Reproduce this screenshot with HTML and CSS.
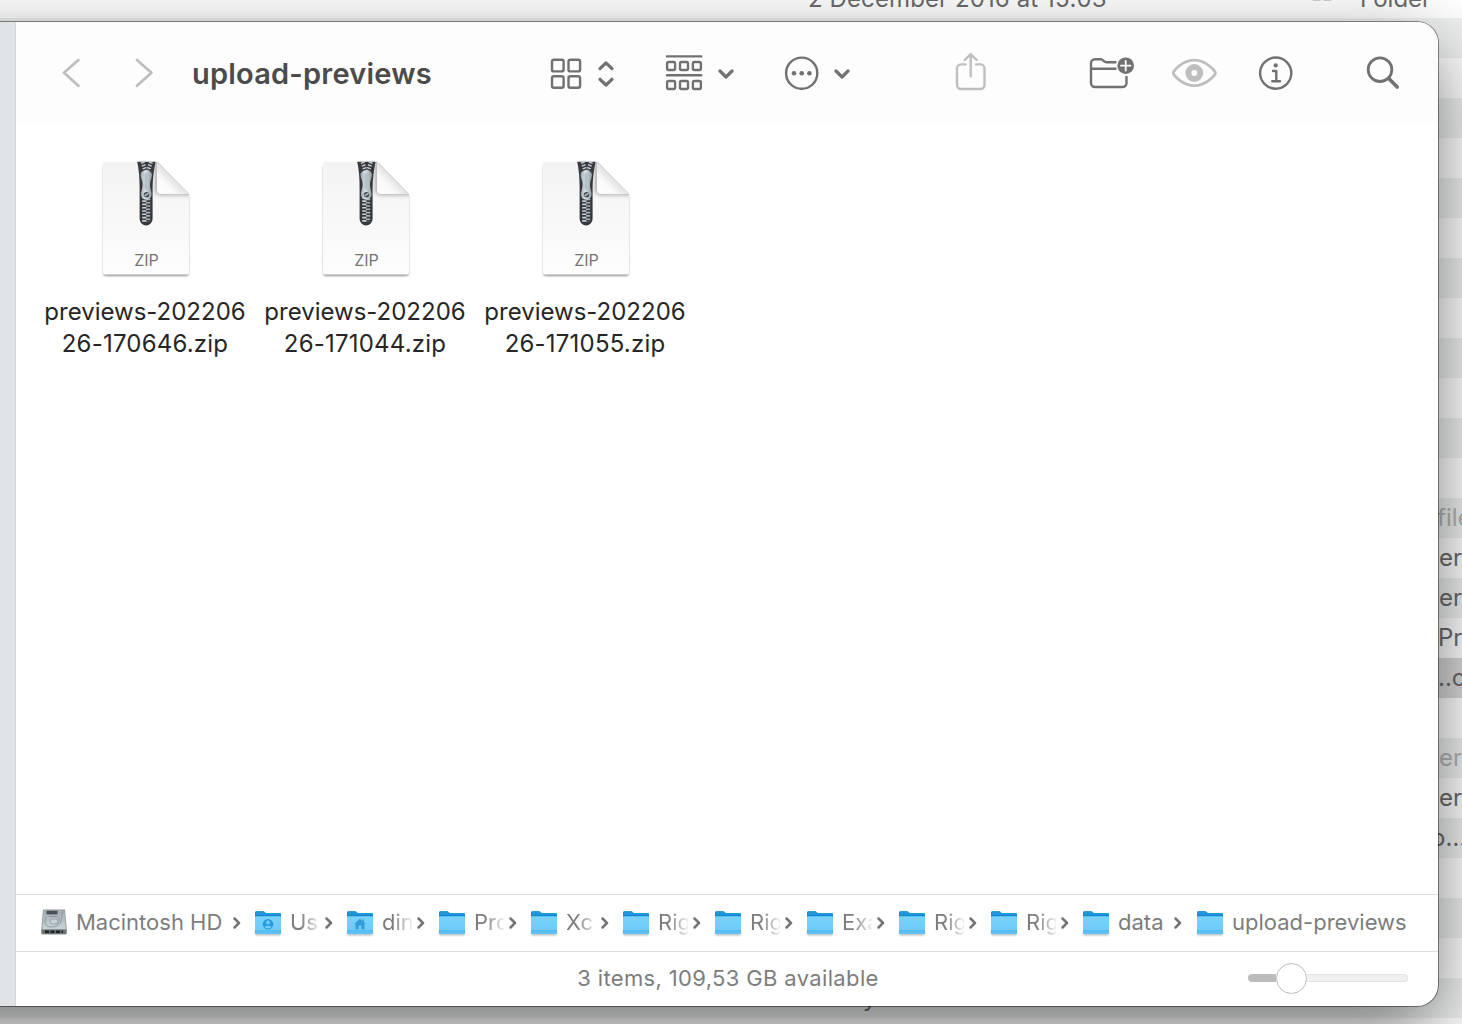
FILE: index.html
```html
<!DOCTYPE html>
<html lang="en">
<head>
<meta charset="utf-8">
<title>upload-previews</title>
<link rel="stylesheet" href="styles.css">
</head>
<body>
<svg class="defs" width="0" height="0" aria-hidden="true">
  <defs>
    <linearGradient id="folderFront" x1="0" y1="0" x2="0" y2="1"><stop offset="0" stop-color="#7bd3fd"/><stop offset=".75" stop-color="#6dcbfa"/><stop offset=".8" stop-color="#58bcf0"/><stop offset="1" stop-color="#62c3f5"/></linearGradient>
    <linearGradient id="page" x1="0" y1="0" x2="0" y2="1"><stop offset="0" stop-color="#f3f3f3"/><stop offset="1" stop-color="#fdfdfd"/></linearGradient>
    <linearGradient id="fold" x1="0" y1="1" x2="1" y2="0"><stop offset="0" stop-color="#ffffff"/><stop offset=".3" stop-color="#f9f9f9"/><stop offset=".5" stop-color="#e2e2e2"/></linearGradient>
    <linearGradient id="metal" x1="0" y1="0" x2="1" y2="0"><stop offset="0" stop-color="#97a3aa"/><stop offset=".4" stop-color="#d8e2e8"/><stop offset="1" stop-color="#8f9ba2"/></linearGradient>
    <linearGradient id="disk" x1="0" y1="0" x2="0" y2="1"><stop offset="0" stop-color="#a3acaf"/><stop offset="1" stop-color="#c9d5da"/></linearGradient>
    <filter id="soft" x="-20%" y="-20%" width="140%" height="140%"><feGaussianBlur stdDeviation="1.1"/></filter>
    <filter id="softWide" x="-30%" y="-30%" width="160%" height="160%"><feGaussianBlur stdDeviation="2.2"/></filter>
    <clipPath id="pageClip"><path d="M105.500 161.700H157.500L189 194V272a2.500 2.500 0 0 1-2.500 2.500H105.500a2.500 2.500 0 0 1-2.500-2.500V164.200a2.500 2.500 0 0 1 2.500-2.500Z"/></clipPath>
    <symbol id="folder" viewBox="0 0 28 28">
      <rect x="1" y="22" width="26" height="4.200" rx="1.500" fill="#6b7a83" opacity=".55" filter="url(#soft)"/>
      <path d="M1 4.200C1 2.800 1.700 2.200 3 2.200H8.800C10.600 2.200 10.400 4 12.300 4H25.200C26.400 4 27 4.600 27 5.800V12H1Z" fill="#0d86cf"/>
      <path d="M1 4.200C1 2.800 1.700 2.200 3 2.200H8.800C10.600 2.200 10.400 4 12.300 4H25.200C26.400 4 27 4.600 27 5.800V6H1Z" fill="#2196da"/>
      <path d="M1 8.300C1 7.700 1.400 7.300 2 7.300H26C26.600 7.300 27 7.700 27 8.300V23.500C27 24.600 26.500 25.100 25.400 25.100H2.600C1.500 25.100 1 24.600 1 23.500Z" fill="url(#folderFront)"/>
    </symbol>
    <symbol id="zip" viewBox="98 156 96 126">
      <path d="M106 164H157.500L188.500 196V273.500a2.500 2.500 0 0 1-2.500 2.500H106a2.500 2.500 0 0 1-2.500-2.500V166Z" fill="#000" opacity=".42" filter="url(#soft)"/>
      <path d="M105.500 161.700H157.500L189 194V272a2.500 2.500 0 0 1-2.500 2.500H105.500a2.500 2.500 0 0 1-2.500-2.500V164.200a2.500 2.500 0 0 1 2.500-2.500Z" fill="url(#page)"/>
      <g clip-path="url(#pageClip)">
        <path d="M155 160V190a6 6 0 0 0 6 5H194V158Z" fill="#000" opacity=".3" filter="url(#softWide)"/>
      </g>
      <path d="M157 161.700 189 194H161a4 4 0 0 1-4-4Z" fill="url(#fold)"/>
      <path d="M137.200 161.700H155.500C154 170 152.600 178 152.600 188V219a6.500 6.500 0 0 1-13 0V188C139.600 178 139 170 137.200 161.700Z" fill="#37383c"/>
      <path d="M142.500 162L145.500 171M151 162 148 171" fill="none" stroke="#c3ccd1" stroke-width="4" stroke-dasharray="1.500 1.400"/>
      <path d="M144.300 197V222" fill="none" stroke="#c6d0d5" stroke-width="4.200" stroke-dasharray="1.600 1.700"/>
      <path d="M148.100 198.600V222" fill="none" stroke="#aab5bb" stroke-width="4.200" stroke-dasharray="1.600 1.700"/>
      <path d="M146.200 170.500C150 170.500 152 172.500 152 175C152 177.500 149.800 181 150 185C150.200 189 151.500 191 151.500 194C151.500 197.500 149.500 199.500 146.200 199.500S141 197.500 141 194C141 191 142.400 189 142.600 185C142.800 181 140.500 177.500 140.500 175C140.500 172.500 142.400 170.500 146.200 170.500Z" fill="url(#metal)"/>
      <path d="M146.200 175V188" stroke="#b3c1c9" stroke-width="3.500" stroke-linecap="round"/>
      <circle cx="146.500" cy="194.700" r="2.700" fill="#4a4f53"/><path d="M144.500 196 148.500 193.300" stroke="#c6d0d5" stroke-width="1.300"/>
    </symbol>
    <symbol id="down" viewBox="0 0 16 40"><path d="M2 18 8 24 14 18"/></symbol>
    <symbol id="sep" viewBox="0 0 8 14"><path d="M1.500 2.500 6 7 1.500 11.500" fill="none" stroke="#747474" stroke-width="2.500" stroke-linecap="round" stroke-linejoin="round"/></symbol>
  </defs>
</svg>

<div class="desktop">
  <div class="backlist">
    <div class="row"><span></span><span class="date">2 December 2016 at 15:03</span><span class="dim">--</span><span>Folder</span></div>
    <div class="row"></div><div class="row"></div><div class="row"></div><div class="row"></div><div class="row"></div>
    <div class="row"></div><div class="row"></div><div class="row"></div><div class="row"></div><div class="row"></div>
    <div class="row"></div><div class="row"></div>
    <div class="row faded"><span class="kind">file</span></div>
    <div class="row"><span class="kind near">er</span></div>
    <div class="row"><span class="kind near">er</span></div>
    <div class="row"><span class="kind mid">Pr</span></div>
    <div class="row selected"><span class="kind mid">..o</span></div>
    <div class="row"></div>
    <div class="row faded"><span class="kind near">er</span></div>
    <div class="row"><span class="kind near">er</span></div>
    <div class="row"><span class="kind far">o…</span></div>
    <div class="row"></div><div class="row"></div><div class="row"></div>
    <div class="row"><span></span><span class="tail">y</span></div>
    <div class="row"></div>
  </div>

  <div class="window">
    <aside class="sidebar"></aside>
    <main class="main">
      <header class="toolbar">
        <svg class="ic light back" width="20" height="40" viewBox="61 53 20 40"><path d="M78.400 60 64 72.800 78.400 85.800"/></svg>
        <svg class="ic light forward" width="20" height="40" viewBox="134 53 20 40"><path d="M137 60 151.400 72.800 137 85.800"/></svg>
        <h1 class="title">upload-previews</h1>
        <svg class="ic view" width="66" height="40" viewBox="550 53 66 40">
          <rect x="552" y="59.800" width="11.600" height="11.600" rx="2"/><rect x="568.500" y="59.800" width="11.600" height="11.600" rx="2"/>
          <rect x="552" y="76.200" width="11.600" height="11.600" rx="2"/><rect x="568.500" y="76.200" width="11.600" height="11.600" rx="2"/>
          <path class="bold" d="M600 68.600 606 62.900 612 68.600M600 79.300 606 85 612 79.300"/>
        </svg>
        <svg class="ic group" width="38" height="40" viewBox="665 53 38 40">
          <path d="M667 56.400H701.300M667 75.200H701.300"/>
          <rect x="667.100" y="62" width="8" height="8" rx="1.500"/><rect x="680" y="62" width="8" height="8" rx="1.500"/><rect x="692.900" y="62" width="8" height="8" rx="1.500"/>
          <rect x="667.100" y="81" width="8" height="8" rx="1.500"/><rect x="680" y="81" width="8" height="8" rx="1.500"/><rect x="692.900" y="81" width="8" height="8" rx="1.500"/>
        </svg>
        <svg class="ic bold drop" width="16" height="40"><use href="#down"/></svg>
        <svg class="ic more" width="36" height="40" viewBox="784 53 36 40"><circle cx="801.700" cy="73.200" r="15.600"/><g class="solid"><circle cx="794" cy="73.200" r="2.300"/><circle cx="801.700" cy="73.200" r="2.300"/><circle cx="809.400" cy="73.200" r="2.300"/></g></svg>
        <svg class="ic bold drop2" width="16" height="40"><use href="#down"/></svg>
        <svg class="ic light share" width="32" height="40" viewBox="955 53 32 40"><path d="M965.500 64.400H961a4 4 0 0 0-4 4V85a4 4 0 0 0 4 4H980.500a4 4 0 0 0 4-4V68.400a4 4 0 0 0-4-4H976M970.700 76.300V54.500M964.800 60 970.700 54.200 976.600 60"/></svg>
        <svg class="ic newfolder" width="46" height="40" viewBox="1089 53 46 40"><path d="M1115.500 62.300H1106.500C1103.700 62.300 1103.500 59.300 1100.500 59.300H1095a4 4 0 0 0-4 4V83a4 4 0 0 0 4 4H1122.500a4 4 0 0 0 4-4V77M1091 68.700H1115.500"/><circle class="solid" cx="1125.700" cy="65.700" r="8.300"/><path class="cut" d="M1125.700 60.900V70.500M1120.900 65.700H1130.500"/></svg>
        <svg class="ic light eye" width="46" height="40" viewBox="1171 53 46 40"><path d="M1173.200 73C1173.200 71.500 1182 60.200 1194.300 60.200S1215.500 71.500 1215.500 73S1206.600 85.700 1194.300 85.700S1173.200 74.500 1173.200 73Z"/><circle cx="1194.300" cy="73" r="5.900" class="iris"/></svg>
        <svg class="ic info" width="36" height="40" viewBox="1258 53 36 40"><circle cx="1275.700" cy="73.100" r="15.600"/><circle class="solid" cx="1275.700" cy="65.400" r="2.100"/><path d="M1273 71H1276.300V81.200M1272.300 81.200H1280"/></svg>
        <svg class="ic search" width="34" height="40" viewBox="1366 53 34 40"><circle cx="1380" cy="69.700" r="11.800"/><path class="handle" d="M1389 78.700 1397.200 87"/></svg>
      </header>

      <section class="files">
        <figure class="file"><div class="thumb"><svg width="96" height="126"><use href="#zip"/></svg><span class="badge">ZIP</span></div><figcaption>previews-202206<br><span class="wide">26-170646.zip</span></figcaption></figure>
        <figure class="file"><div class="thumb"><svg width="96" height="126"><use href="#zip"/></svg><span class="badge">ZIP</span></div><figcaption>previews-202206<br><span class="wide">26-171044.zip</span></figcaption></figure>
        <figure class="file"><div class="thumb"><svg width="96" height="126"><use href="#zip"/></svg><span class="badge">ZIP</span></div><figcaption>previews-202206<br><span class="wide">26-171055.zip</span></figcaption></figure>
      </section>

      <nav class="pathbar">
        <div class="crumb root">
          <svg width="28" height="28" viewBox="0 0 28 28"><path d="M3 .5H25L26.600 19V23.800a1.500 1.500 0 0 1-1.500 1.500H2.900a1.500 1.500 0 0 1-1.500-1.500V19Z" fill="#8b9598"/><path d="M3.500 1.200H24.500L25.800 20.500H2.200Z" fill="url(#disk)"/><path d="M1.400 20.500H26.600V23.800a1.500 1.500 0 0 1-1.500 1.500H2.900a1.500 1.500 0 0 1-1.500-1.500Z" fill="#6d7577"/><path d="M5 22.800H23" stroke="#1f2222" stroke-width="2.400" stroke-dasharray="4 1.500"/><rect x="6.500" y="1.800" width="11" height="3.600" fill="#4a5153"/><path d="M6.500 7.500C3 13 5 18.500 12 18C20 18 22.500 13 22 2.500M9 7.500H17C20 8 20 13.500 16.500 15.500" fill="none" stroke="#7f898d" stroke-width=".7"/><ellipse cx="14" cy="12.500" rx="3.800" ry="2.700" fill="#c9d3d7" stroke="#8b9599" stroke-width=".7"/></svg>
          <span class="name">Macintosh HD</span><svg class="sep" width="8" height="14"><use href="#sep"/></svg>
        </div>
        <div class="crumb"><svg width="28" height="28" viewBox="0 0 28 28"><use href="#folder"/><circle cx="14" cy="15.300" r="5.200" fill="#289bdc"/><circle cx="14" cy="13.600" r="2" fill="#70cdfa"/><path d="M10.500 18C11.500 16.200 16.500 16.200 17.500 18C16 19.700 12 19.700 10.500 18Z" fill="#70cdfa"/></svg><span class="name cut-off">Us</span><svg class="sep" width="8" height="14"><use href="#sep"/></svg></div>
        <div class="crumb"><svg width="28" height="28" viewBox="0 0 28 28"><use href="#folder"/><path d="M8 15 14 9.800 16.500 12V10.500H18V13.300L20 15H18.500V20.300H9.500V15Z" fill="#329fdb"/><path d="M12.700 20.500V16.500H15.300V20.500" fill="#70cdfa"/></svg><span class="name cut-off">din</span><svg class="sep" width="8" height="14"><use href="#sep"/></svg></div>
        <div class="crumb"><svg width="28" height="28"><use href="#folder"/></svg><span class="name cut-off">Pro</span><svg class="sep" width="8" height="14"><use href="#sep"/></svg></div>
        <div class="crumb"><svg width="28" height="28"><use href="#folder"/></svg><span class="name cut-off">Xc</span><svg class="sep" width="8" height="14"><use href="#sep"/></svg></div>
        <div class="crumb"><svg width="28" height="28"><use href="#folder"/></svg><span class="name cut-off">Rig</span><svg class="sep" width="8" height="14"><use href="#sep"/></svg></div>
        <div class="crumb"><svg width="28" height="28"><use href="#folder"/></svg><span class="name cut-off">Rig</span><svg class="sep" width="8" height="14"><use href="#sep"/></svg></div>
        <div class="crumb"><svg width="28" height="28"><use href="#folder"/></svg><span class="name cut-off">Exa</span><svg class="sep" width="8" height="14"><use href="#sep"/></svg></div>
        <div class="crumb"><svg width="28" height="28"><use href="#folder"/></svg><span class="name cut-off">Rig</span><svg class="sep" width="8" height="14"><use href="#sep"/></svg></div>
        <div class="crumb"><svg width="28" height="28"><use href="#folder"/></svg><span class="name cut-off">Rig</span><svg class="sep" width="8" height="14"><use href="#sep"/></svg></div>
        <div class="crumb data"><svg width="28" height="28"><use href="#folder"/></svg><span class="name">data</span><svg class="sep" width="8" height="14"><use href="#sep"/></svg></div>
        <div class="crumb last"><svg width="28" height="28"><use href="#folder"/></svg><span class="name">upload-previews</span></div>
      </nav>

      <footer class="status">
        <span class="summary">3 items, 109,53 GB available</span>
        <div class="slider"><span class="done"></span><span class="knob"></span><span class="rest"></span></div>
      </footer>
    </main>
  </div>
</div>
</body>
</html>
```
FILE: styles.css
```css
* { box-sizing: border-box; }
body { margin: 0; font-family: Inter, "Liberation Sans", sans-serif; }
.defs { position: absolute; }
.desktop { position: relative; width: 1462px; height: 1024px; overflow: hidden; background: #fff; }

.backlist { margin-top: -22px; color: #6b6b6b; font-size: 24px; }
.row { display: grid; grid-template-columns: 808px 503px 49px 102px; align-items: center; height: 40px; padding-bottom: 2px; white-space: nowrap; background: #fff; }
.row:first-child { padding-bottom: 0; }
.row:nth-child(even) { background: #eff2f1; }
.row.selected { background: #d8d8d8; }
.row.faded { color: #b5b5b5; }
.date { letter-spacing: .1px; }
.dim { color: #cfcfcf; }
.kind { grid-column: 4; padding-left: 77px; }
.kind.near { padding-left: 79px; }
.kind.mid { padding-left: 78px; }
.kind.far { padding-left: 71px; }
.tail { padding-left: 55px; }

.window { position: absolute; left: -420px; top: 22px; width: 1858px; height: 984px; display: flex; border-radius: 0 21px 21px 0; background: #fff; box-shadow: 0 0 0 1px rgba(0, 0, 0, .42), 0 24px 72px rgba(0, 0, 0, .52); overflow: hidden; }
.sidebar { flex: 0 0 436px; background: #e0e4e7; border-right: 1px solid #d2d6d9; }
.main { flex: 1; display: flex; flex-direction: column; min-width: 0; }

.toolbar { flex: 0 0 102px; display: flex; align-items: center; padding-left: 45px; background: #fdfdfd; }
.title { margin: 1px 0 0 38px; width: 358px; font-size: 29px; line-height: 40px; font-weight: 600; letter-spacing: .2px; color: #4b4b4b; white-space: nowrap; }
.ic { flex: none; fill: none; stroke: #717171; stroke-width: 2.4; stroke-linecap: round; stroke-linejoin: round; }
.ic.light { stroke: #bebebe; }
.ic.back, .ic.forward { stroke-width: 2.8; }
.bold, .ic.bold { stroke-width: 3.2; }
.solid { fill: #717171; stroke: none; }
.cut { stroke: #fdfdfd; stroke-width: 1.8; }
.iris { stroke-width: 6; }
.handle { stroke-width: 3.6; }
.forward { margin-left: 53px; }
.group { margin-left: 49px; }
.drop { margin-left: 15px; }
.more { margin-left: 50px; }
.drop2 { margin-left: 14px; }
.share { margin-left: 105px; }
.newfolder { margin-left: 102px; }
.ic.eye { margin-left: 36px; stroke-width: 2.7; }
.info { margin-left: 41px; }
.ic.search { margin-left: 72px; stroke-width: 2.8; }

.files { flex: 1; display: flex; padding: 32px 0 0 20px; }
.file { width: 220px; margin: 0; display: flex; flex-direction: column; align-items: center; }
.thumb { display: grid; height: 126px; }
.thumb > * { grid-area: 1 / 1; }
.badge { align-self: end; justify-self: center; margin: 0 0 12px 1px; font-size: 16px; line-height: 20px; color: #757575; }
.file figcaption { margin-top: 14px; padding-right: 2px; font-size: 24px; line-height: 32px; color: #262626; text-align: center; white-space: nowrap; }
.wide { letter-spacing: .2px; }

.pathbar { flex: 0 0 57px; display: flex; align-items: center; padding-left: 24px; border-top: 1px solid #dcdcdc; color: #7d7d7d; font-size: 22px; }
.crumb { flex: 0 0 92px; display: flex; align-items: center; }
.crumb > svg { flex: none; }
.crumb.root { flex-basis: 214px; }
.crumb.data { flex-basis: 114px; }
.crumb.last { flex-basis: auto; }
.name { flex: none; margin: 0 0 2px 8px; line-height: 30px; white-space: nowrap; }
.cut-off { width: 30px; overflow: hidden; -webkit-mask-image: linear-gradient(90deg, #000 35%, transparent 108%); mask-image: linear-gradient(90deg, #000 35%, transparent 108%); }
.sep { margin-left: 5px; }
.root .sep, .data .sep { margin-left: 11px; }

.status { flex: 0 0 55px; display: grid; grid-template-columns: 1232px 160px; align-items: center; border-top: 1px solid #dcdcdc; padding-bottom: 2px; }
.summary { padding-left: 192px; text-align: center; font-size: 22px; letter-spacing: .35px; color: #7d7d7d; }
.slider { display: flex; align-items: center; height: 32px; }
.done { flex: 0 0 28px; height: 8px; border-radius: 4px 0 0 4px; background: #bcbcbc; }
.knob { flex: none; width: 31px; height: 31px; border: 1.5px solid #bdbdbd; border-radius: 50%; background: #fff; }
.rest { flex: 1; height: 8px; border-radius: 0 4px 4px 0; background: #f0f0f0; border: 1px solid #e3e3e3; border-left: 0; }
```
